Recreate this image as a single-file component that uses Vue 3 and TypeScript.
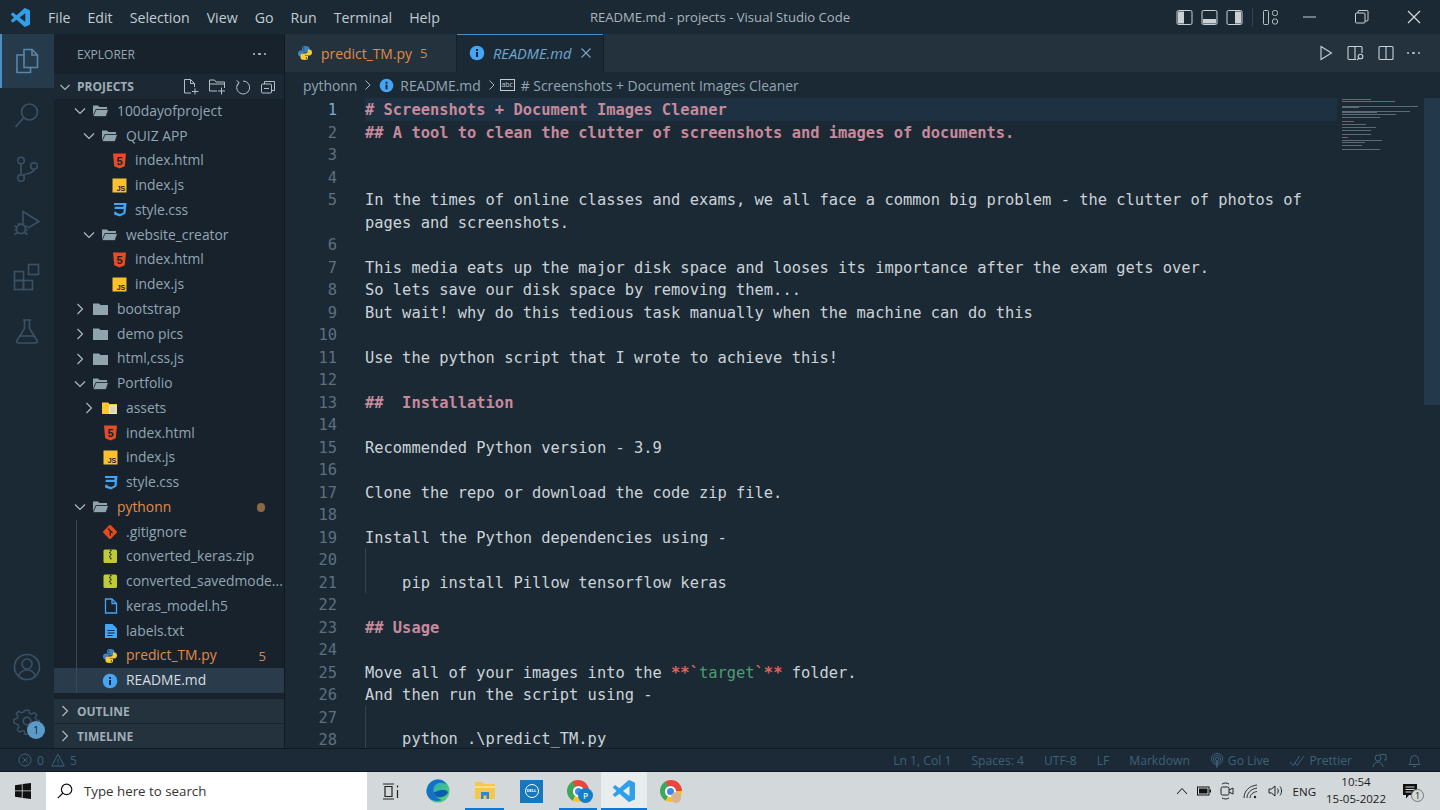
<script setup lang="ts">
interface TreeRow {
  label: string
  depth: number
  icon: string
  open?: boolean
  cls?: string
  guide?: boolean
  badge?: string
  dot?: boolean
}

interface Seg {
  t: string
  c?: string
}

interface CodeRow {
  n: number | null
  segs: Seg[]
  guide?: boolean
}

const menus = ['File', 'Edit', 'Selection', 'View', 'Go', 'Run', 'Terminal', 'Help']

const tree: TreeRow[] = [
  { label: '100dayofproject', depth: 0, icon: 'folder-open', open: true },
  { label: 'QUIZ APP', depth: 1, icon: 'folder-open', open: true },
  { label: 'index.html', depth: 2, icon: 'html' },
  { label: 'index.js', depth: 2, icon: 'js' },
  { label: 'style.css', depth: 2, icon: 'css' },
  { label: 'website_creator', depth: 1, icon: 'folder-open', open: true },
  { label: 'index.html', depth: 2, icon: 'html' },
  { label: 'index.js', depth: 2, icon: 'js' },
  { label: 'bootstrap', depth: 0, icon: 'folder', open: false },
  { label: 'demo pics', depth: 0, icon: 'folder', open: false },
  { label: 'html,css,js', depth: 0, icon: 'folder', open: false },
  { label: 'Portfolio', depth: 0, icon: 'folder-open', open: true },
  { label: 'assets', depth: 1, icon: 'folder-assets', open: false },
  { label: 'index.html', depth: 1, icon: 'html' },
  { label: 'index.js', depth: 1, icon: 'js' },
  { label: 'style.css', depth: 1, icon: 'css' },
  { label: 'pythonn', depth: 0, icon: 'folder-open', open: true, cls: 'warn', dot: true },
  { label: '.gitignore', depth: 1, icon: 'git', guide: true },
  { label: 'converted_keras.zip', depth: 1, icon: 'zip', guide: true },
  { label: 'converted_savedmode...', depth: 1, icon: 'zip', guide: true },
  { label: 'keras_model.h5', depth: 1, icon: 'file', guide: true },
  { label: 'labels.txt', depth: 1, icon: 'txt', guide: true },
  { label: 'predict_TM.py', depth: 1, icon: 'python', cls: 'warn', guide: true, badge: '5' },
  { label: 'README.md', depth: 1, icon: 'info', cls: 'selected', guide: true },
]

const plain = (n: number | null, t = '', guide = false): CodeRow => ({
  n,
  segs: t ? [{ t }] : [],
  guide,
})
const head = (n: number, t: string): CodeRow => ({ n, segs: [{ t, c: 'heading' }] })

const code: CodeRow[] = [
  head(1, '# Screenshots + Document Images Cleaner'),
  head(2, '## A tool to clean the clutter of screenshots and images of documents.'),
  plain(3),
  plain(4),
  plain(5, 'In the times of online classes and exams, we all face a common big problem - the clutter of photos of'),
  plain(null, 'pages and screenshots.'),
  plain(6),
  plain(7, 'This media eats up the major disk space and looses its importance after the exam gets over.'),
  plain(8, 'So lets save our disk space by removing them...'),
  plain(9, 'But wait! why do this tedious task manually when the machine can do this'),
  plain(10),
  plain(11, 'Use the python script that I wrote to achieve this!'),
  plain(12),
  head(13, '##  Installation'),
  plain(14),
  plain(15, 'Recommended Python version - 3.9'),
  plain(16),
  plain(17, 'Clone the repo or download the code zip file.'),
  plain(18),
  plain(19, 'Install the Python dependencies using -'),
  plain(20, '', true),
  plain(21, '    pip install Pillow tensorflow keras', true),
  plain(22),
  head(23, '## Usage'),
  plain(24),
  {
    n: 25,
    segs: [
      { t: 'Move all of your images into the ' },
      { t: '**`', c: 'mark' },
      { t: 'target', c: 'inline' },
      { t: '`**', c: 'mark' },
      { t: ' folder.' },
    ],
  },
  plain(26, 'And then run the script using -'),
  plain(27, '', true),
  plain(28, '    python .\\predict_TM.py', true),
]

// the minimap also shows two rows that sit below the visible part of the file
const miniRows = [
  ...code.map((r) => ({
    width: r.segs.reduce((sum, s) => sum + s.t.length, 0),
    heading: r.segs[0]?.c === 'heading',
  })),
  { width: 0, heading: false },
  { width: 50, heading: false },
]

const rowIndent = (depth: number) => `${18 + depth * 9}px`
</script>

<template>
  <div class="page">
    <svg class="defs" aria-hidden="true">
      <symbol id="i-python" viewBox="0 0 16 16">
        <path fill="#3f83bd" d="M8 1C5.200 1 5 2.200 5 3.400V5h3.200v.6H3.500C2 5.600 1 6.800 1 8.500s1 3 2.500 3H5V9.700c0-1.200 1-2.200 2.300-2.200h3.200c1.100 0 2-.9 2-2V3.300C12.500 2 11 1 8 1z" />
        <path fill="#f5cd3d" d="M8 15c2.800 0 3-1.200 3-2.400V11H7.800v-.6h4.700c1.500 0 2.500-1.200 2.500-2.900s-1-3-2.500-3H11v1.800c0 1.200-1 2.200-2.300 2.200H5.500c-1.100 0-2 .9-2 2v2.200C3.500 14 5 15 8 15z" />
        <circle cx="6.600" cy="3" r=".7" fill="#17222d" />
        <circle cx="9.400" cy="13" r=".7" fill="#17222d" />
      </symbol>
      <symbol id="i-info" viewBox="0 0 16 16">
        <circle cx="8" cy="8" r="7.300" fill="#42a5f5" />
        <rect x="7" y="7" width="2" height="5" fill="#17222d" />
        <rect x="7" y="4" width="2" height="2" fill="#17222d" />
      </symbol>
      <symbol id="i-vscode" viewBox="0 0 24 24">
        <path fill="#2f9fe8" d="M23.150 2.587L18.210.21a1.494 1.494 0 0 0-1.705.29l-9.460 8.630-4.120-3.128a.999.999 0 0 0-1.276.057L.327 7.261A1 1 0 0 0 .326 8.740L3.899 12 .326 15.260a1 1 0 0 0 .001 1.479L1.650 17.940a.999.999 0 0 0 1.276.057l4.120-3.128 9.460 8.630a1.492 1.492 0 0 0 1.704.29l4.942-2.377A1.500 1.500 0 0 0 24 20.060V3.939a1.500 1.500 0 0 0-.85-1.352zm-5.146 14.861L10.826 12l7.178-5.448v10.896z" />
      </symbol>
    </svg>

    <header class="titlebar">
      <svg class="logo" width="19" height="19" viewBox="0 0 24 24"><use href="#i-vscode" /></svg>
      <nav class="menu">
        <span v-for="m in menus" :key="m">{{ m }}</span>
      </nav>
      <div class="window-title">README.md - projects - Visual Studio Code</div>
      <div class="title-actions">
        <svg width="17" height="17" viewBox="0 0 17 17"><rect x="1" y="1.500" width="15" height="14" rx="1.500" fill="none" stroke="#c9d1d6" /><path d="M2 2.500h6v12H2z" fill="#c9d1d6" /></svg>
        <svg width="17" height="17" viewBox="0 0 17 17"><rect x="1" y="1.500" width="15" height="14" rx="1.500" fill="none" stroke="#c9d1d6" /><path d="M2 10h13v4.500H2z" fill="#c9d1d6" /></svg>
        <svg width="17" height="17" viewBox="0 0 17 17"><rect x="1" y="1.500" width="15" height="14" rx="1.500" fill="none" stroke="#c9d1d6" /><path d="M9 2.500h6v12H9z" fill="#c9d1d6" /></svg>
        <i class="title-sep"></i>
        <svg width="17" height="17" viewBox="0 0 17 17" fill="none" stroke="#b8c2c8"><rect x="1.500" y="1.500" width="5" height="14" rx="1" /><rect x="10.500" y="1.500" width="5" height="5" rx="2" /><rect x="10.500" y="10" width="5" height="5" rx="2" /></svg>
      </div>
      <div class="win-controls">
        <svg width="14" height="14" viewBox="0 0 14 14"><path d="M0 7h13" stroke="#c9d1d6" /></svg>
        <svg width="14" height="14" viewBox="0 0 14 14" fill="none" stroke="#c9d1d6"><rect x=".5" y="3" width="9.500" height="10" rx="1" /><path d="M3 3V1.500a1 1 0 0 1 1-1h8a1 1 0 0 1 1 1V10a1 1 0 0 1-1 1h-2" /></svg>
        <svg width="14" height="14" viewBox="0 0 14 14"><path d="M1 1l12 12M13 1L1 13" stroke="#d4dade" stroke-width="1.200" /></svg>
      </div>
    </header>

    <div class="workbench">
      <aside class="activity">
        <div class="act act-on">
          <svg width="28" height="28" viewBox="0 0 28 28" fill="none" stroke="#5b87a8" stroke-width="1.600"><path d="M11 2.500h8l5.500 5.500v12.500H11z" /><path d="M19 2.500V8h5.500" /><path d="M11 8H4v17.500h13.500v-5" /></svg>
        </div>
        <div class="act">
          <svg width="28" height="28" viewBox="0 0 28 28" fill="none" stroke="#3b5164" stroke-width="1.600"><circle cx="16.500" cy="11" r="8" /><path d="M10.500 17L2.500 26" /></svg>
        </div>
        <div class="act">
          <svg width="28" height="28" viewBox="0 0 28 28" fill="none" stroke="#3b5164" stroke-width="1.600"><circle cx="8" cy="5.500" r="3.300" /><circle cx="8" cy="23" r="3.300" /><circle cx="21" cy="11" r="3.300" /><path d="M8 9v10.500M21 14.500c0 4-7 3-11 6" /></svg>
        </div>
        <div class="act">
          <svg width="28" height="28" viewBox="0 0 28 28" fill="none" stroke="#3b5164" stroke-width="1.600"><path d="M10 14V2.500L26 12.500 15 19" /><circle cx="8" cy="20" r="4.500" /><path d="M1.500 17l3 1.500M1.500 21h2M1.500 25.500l3-2M14.500 17l-3 1.500M14.500 21h-2M14.500 25.500l-3-2M4.500 15h7" /></svg>
        </div>
        <div class="act">
          <svg width="28" height="28" viewBox="0 0 28 28" fill="none" stroke="#3b5164" stroke-width="1.600"><rect x="1.500" y="8.500" width="9" height="9" /><rect x="1.500" y="17.500" width="9" height="9" /><rect x="10.500" y="17.500" width="9" height="9" /><rect x="15.500" y="1.500" width="10" height="10" /></svg>
        </div>
        <div class="act">
          <svg width="28" height="28" viewBox="0 0 28 28" fill="none" stroke="#3b5164" stroke-width="1.600"><path d="M10 3h8M11.500 3v8.500L4 23.500c-.8 1.500 0 2.500 1.500 2.500h17c1.500 0 2.300-1 1.500-2.500L16.500 11.500V3" /><path d="M7 19h14" /></svg>
        </div>
        <div class="act act-account">
          <svg width="28" height="28" viewBox="0 0 28 28" fill="none" stroke="#3b5164" stroke-width="1.600"><circle cx="14" cy="14" r="12.500" /><circle cx="14" cy="11" r="5" /><path d="M5.500 23c1.500-4 4.500-6 8.500-6s7 2 8.500 6" /></svg>
        </div>
        <div class="act act-gear">
          <svg width="28" height="28" viewBox="0 0 28 28" fill="none" stroke="#3b5164" stroke-width="1.600"><circle cx="14" cy="14" r="3.800" /><path d="M12 2h4l.8 3.500 2.300 1 3-1.900 2.800 2.800-1.900 3 1 2.300 3.500.8v4l-3.500.8-1 2.300 1.900 3-2.800 2.800-3-1.900-2.300 1-.8 3.500h-4l-.8-3.500-2.300-1-3 1.900-2.800-2.800 1.900-3-1-2.300L-.5 16v-4L3 11.200l1-2.300-1.900-3 2.800-2.800 3 1.900 2.300-1z" transform="translate(1.400 1.400) scale(.9)" /></svg>
          <span class="gear-badge">1</span>
        </div>
      </aside>

      <aside class="sidebar">
        <div class="side-title">
          <span>EXPLORER</span>
          <span class="dots"><i></i><i></i><i></i></span>
        </div>
        <div class="projects-head">
          <svg class="chev" width="16" height="16" viewBox="0 0 16 16"><path d="M3.500 6l4.500 4.500L12.500 6" fill="none" stroke="#a9b6bf" stroke-width="1.100" /></svg>
          <strong>PROJECTS</strong>
          <div class="projects-actions">
            <svg width="17" height="17" viewBox="0 0 17 17" fill="none" stroke="#b3bec5"><path d="M9 15H2.500V1.500h6l4 4V9M8.500 1.500v4h4M13 10.500v6M10 13.500h6.500" /></svg>
            <svg width="18" height="17" viewBox="0 0 18 17" fill="none" stroke="#b3bec5"><path d="M9 13H1.500V2h5l1.500 2h8.500v6M1.500 6h15M13.500 9.500v7M10 13h7" /></svg>
            <svg width="16" height="16" viewBox="0 0 16 16" fill="none" stroke="#b3bec5"><path d="M4 3.500A6.500 6.500 0 1 0 8 2M1.500 1.500L4 3.500 2.500 6.500" /></svg>
            <svg width="16" height="16" viewBox="0 0 16 16" fill="none" stroke="#b3bec5"><rect x="1.500" y="5" width="10" height="9" rx="1" /><path d="M4.500 5V2.500h10v9H11.500M4 9.500h5" /></svg>
          </div>
        </div>
        <div class="tree">
          <div
            v-for="(row, i) in tree"
            :key="i"
            class="tree-row"
            :class="[row.cls, { guided: row.guide }]"
            :style="{ paddingLeft: rowIndent(row.depth) }"
          >
            <span class="chev-slot">
              <svg v-if="row.open === true" width="16" height="16" viewBox="0 0 16 16"><path d="M3 5.500l5 5 5-5" fill="none" stroke="#b3bec5" stroke-width="1.100" /></svg>
              <svg v-else-if="row.open === false" width="16" height="16" viewBox="0 0 16 16"><path d="M5.500 3l5 5-5 5" fill="none" stroke="#b3bec5" stroke-width="1.100" /></svg>
            </span>
            <span class="file-icon">
              <svg v-if="row.icon === 'folder-open'" width="17" height="16" viewBox="0 0 17 16"><path d="M1 13V2.500h5l1.500 1.500H15v2H4z" fill="#90a4ae" /><path d="M1 13.500l3-7h12.500l-2.500 7z" fill="#90a4ae" stroke="#17222d" stroke-width=".7" /></svg>
              <svg v-else-if="row.icon === 'folder'" width="17" height="16" viewBox="0 0 17 16"><path d="M1 2.500h6l1.500 1.500H16v10H1z" fill="#90a4ae" /></svg>
              <svg v-else-if="row.icon === 'folder-assets'" width="17" height="16" viewBox="0 0 17 16"><path d="M1 2.500h6l1.500 1.500H16v10H1z" fill="#fdc52f" /><rect x="8.500" y="6" width="6.500" height="7.500" fill="#d8d6b8" stroke="#f0ecd2" /></svg>
              <svg v-else-if="row.icon === 'html'" width="15" height="16" viewBox="0 0 15 16">
                <path d="M1 .5h13l-1.200 12.800L7.500 15.500l-5.300-2.200z" fill="#e44d26" />
                <text x="7.500" y="11.500" text-anchor="middle" font-size="11" font-weight="700" font-family="Liberation Sans, sans-serif" fill="#17222d">5</text>
              </svg>
              <svg v-else-if="row.icon === 'js'" width="15" height="15" viewBox="0 0 15 15">
                <rect x=".5" y=".5" width="14" height="14" fill="#fbc02d" />
                <text x="9" y="12.500" text-anchor="middle" font-size="7" font-weight="700" font-family="Liberation Sans, sans-serif" fill="#17222d">JS</text>
              </svg>
              <svg v-else-if="row.icon === 'css'" width="15" height="16" viewBox="0 0 15 16"><path d="M2 1h12.500l-1 10.500-5.500 3-6-2 .3-2.800h2.300l-.1 1.100 3.600 1.200 3.300-1.600.3-3.400H2.500l.3-2.300h8.600l.2-1.600H2z" fill="#42a5f5" /></svg>
              <svg v-else-if="row.icon === 'git'" width="16" height="16" viewBox="0 0 16 16"><rect x="2.700" y="2.700" width="10.600" height="10.600" rx="1.200" transform="rotate(45 8 8)" fill="#e64a19" /><path d="M6 4.500l2.200 2.200v5M8.200 6.700l2.300 2.300" stroke="#17222d" stroke-width="1.200" fill="none" /></svg>
              <svg v-else-if="row.icon === 'zip'" width="15" height="15" viewBox="0 0 15 15"><rect x=".5" y=".5" width="13.500" height="13.500" rx="1.500" fill="#c0ca33" /><path d="M7 1.500h1.500M6 3.500h1.500M7 5.500h1.500M6 7.500h1.500M7 9.500h1.500" stroke="#17222d" stroke-width="1.300" /></svg>
              <svg v-else-if="row.icon === 'file'" width="14" height="16" viewBox="0 0 14 16" fill="none" stroke="#42a5f5" stroke-width="1.300"><path d="M1.500 1H8l4.500 4.500V15h-11z" /><path d="M8 1v4.500h4.500" /></svg>
              <svg v-else-if="row.icon === 'txt'" width="14" height="16" viewBox="0 0 14 16"><path d="M1 1h7.500L13 5.500V15H1z" fill="#42a5f5" /><path d="M3.500 7.500h7M3.500 10h7M3.500 12.500h5" stroke="#17222d" /></svg>
              <svg v-else-if="row.icon === 'python'" width="16" height="16"><use href="#i-python" /></svg>
              <svg v-else-if="row.icon === 'info'" width="16" height="16"><use href="#i-info" /></svg>
            </span>
            <span class="tree-label">{{ row.label }}</span>
            <span v-if="row.badge" class="tree-badge">{{ row.badge }}</span>
            <i v-if="row.dot" class="tree-dot"></i>
          </div>
        </div>
        <div class="collapsed-head">
          <svg width="16" height="16" viewBox="0 0 16 16"><path d="M5.500 3l5 5-5 5" fill="none" stroke="#b3bec5" stroke-width="1.100" /></svg>
          <strong>OUTLINE</strong>
        </div>
        <div class="collapsed-head">
          <svg width="16" height="16" viewBox="0 0 16 16"><path d="M5.500 3l5 5-5 5" fill="none" stroke="#b3bec5" stroke-width="1.100" /></svg>
          <strong>TIMELINE</strong>
        </div>
      </aside>

      <main class="editor">
        <div class="tabs">
          <div class="tab">
            <svg width="16" height="16"><use href="#i-python" /></svg>
            <span class="tab-warn">predict_TM.py</span>
            <span class="tab-count">5</span>
          </div>
          <div class="tab tab-active">
            <svg width="16" height="16"><use href="#i-info" /></svg>
            <em>README.md</em>
            <svg class="tab-close" width="12" height="12" viewBox="0 0 12 12"><path d="M1.500 1.500l9 9M10.500 1.500l-9 9" stroke="#7ba7c9" stroke-width="1.100" /></svg>
          </div>
          <div class="tab-actions">
            <svg width="16" height="16" viewBox="0 0 16 16" fill="none" stroke="#c9d1d6" stroke-width="1.100"><path d="M3 1.500L13.500 8 3 14.500z" /></svg>
            <svg width="18" height="16" viewBox="0 0 18 16" fill="none" stroke="#c9d1d6" stroke-width="1.100"><path d="M9 14.500H2a1 1 0 0 1-1-1v-11a1 1 0 0 1 1-1h12a1 1 0 0 1 1 1V8M8 1.500v13" /><circle cx="13.500" cy="11.500" r="2.300" /><path d="M11.800 13.200L10 15" /></svg>
            <svg width="16" height="16" viewBox="0 0 16 16" fill="none" stroke="#c9d1d6" stroke-width="1.100"><rect x="1" y="1.500" width="14" height="13" rx="1" /><path d="M8 1.500v13" /></svg>
            <span class="dots"><i></i><i></i><i></i></span>
          </div>
        </div>
        <div class="crumbs">
          <span>pythonn</span>
          <svg width="10" height="12" viewBox="0 0 10 12"><path d="M2.500 1.500L7 6l-4.500 4.500" fill="none" stroke="#a9b6bf" /></svg>
          <svg width="15" height="15"><use href="#i-info" /></svg>
          <span>README.md</span>
          <svg width="10" height="12" viewBox="0 0 10 12"><path d="M2.500 1.500L7 6l-4.500 4.500" fill="none" stroke="#a9b6bf" /></svg>
          <span class="abc">abc</span>
          <span># Screenshots + Document Images Cleaner</span>
        </div>
        <div class="code-area">
          <div class="code">
            <div v-for="(row, i) in code" :key="i" class="code-row">
              <span class="ln" :class="{ 'ln-on': row.n === 1 }">{{ row.n }}</span>
              <span class="line" :class="{ 'line-on': row.n === 1, 'line-guide': row.guide }"><span v-for="(seg, j) in row.segs" :key="j" :class="seg.c">{{ seg.t }}</span></span>
            </div>
          </div>
          <div class="minimap">
            <div v-for="(m, i) in miniRows" :key="i" class="mini-row">
              <i :class="{ 'mini-head': m.heading }" :style="{ width: `${m.width * 0.75}px` }"></i>
            </div>
          </div>
          <div class="scrolltrack"><div class="scrollthumb"></div></div>
        </div>
      </main>
    </div>

    <footer class="statusbar">
      <div class="status-left">
        <svg width="14" height="14" viewBox="0 0 14 14" fill="none" stroke="#3e6179"><circle cx="7" cy="7" r="6" /><path d="M4.500 4.500l5 5M9.500 4.500l-5 5" /></svg>
        <span>0</span>
        <svg width="14" height="14" viewBox="0 0 14 14" fill="none" stroke="#3e6179"><path d="M7 1.200L13.200 13H.8zM7 5.500v4M7 10.500v1.200" /></svg>
        <span>5</span>
      </div>
      <div class="status-right">
        <span>Ln 1, Col 1</span>
        <span>Spaces: 4</span>
        <span>UTF-8</span>
        <span>LF</span>
        <span>Markdown</span>
        <span class="with-icon">
          <svg width="14" height="15" viewBox="0 0 14 15" fill="none" stroke="#3e6179"><circle cx="7" cy="6" r="1.600" /><circle cx="7" cy="6" r="3.600" /><circle cx="7" cy="6" r="5.600" /><path d="M7 8v6.500" stroke-width="1.600" /></svg>
          Go Live
        </span>
        <span class="with-icon">
          <svg width="16" height="13" viewBox="0 0 16 13" fill="none" stroke="#3e6179"><path d="M1 8l3 3.500L10.500 2M6 9l2 2.500L15 2" /></svg>
          Prettier
        </span>
        <svg width="15" height="15" viewBox="0 0 15 15" fill="none" stroke="#3e6179"><circle cx="6" cy="5" r="3" /><path d="M1 14c.5-3 2.500-5 5-5s4.500 2 5 5M8 1.500h6V7h-2" /></svg>
        <svg width="15" height="15" viewBox="0 0 15 15" fill="none" stroke="#3e6179"><path d="M2 11.500c1.500-1 1.500-2.500 1.500-5a4 4 0 0 1 8 0c0 2.500 0 4 1.500 5zM6 13.500h3" /></svg>
      </div>
    </footer>

    <div class="taskbar">
      <div class="start">
        <svg width="16" height="16" viewBox="0 0 16 16" fill="#111"><path d="M0 2.200L6.800 1.200V7.500H0zM7.600 1.100L16 0V7.500H7.600zM0 8.300H6.800V14.800L0 13.800zM7.600 8.300H16V16L7.600 14.900z" /></svg>
      </div>
      <div class="search">
        <svg width="16" height="16" viewBox="0 0 20 20" fill="none" stroke="#111" stroke-width="1.500"><circle cx="12" cy="8" r="6.500" /><path d="M7.500 12.500L1 19" /></svg>
        <span>Type here to search</span>
      </div>
      <div class="task-apps">
        <div class="task-cell">
          <svg width="18" height="17" viewBox="0 0 18 17" fill="none" stroke="#222" stroke-width="1.200"><path d="M1 1h11M1 16h11M3 3.500h7v10H3zM15.500 2.500v2M15.500 7v8" /></svg>
        </div>
        <div class="task-cell">
          <svg width="24" height="24" viewBox="0 0 24 24">
            <defs>
              <linearGradient id="edge-a" x1="0" y1="0" x2="1" y2="1"><stop offset="0" stop-color="#1aa3c9" /><stop offset="1" stop-color="#5ed66b" /></linearGradient>
            </defs>
            <circle cx="12" cy="12" r="11.500" fill="url(#edge-a)" />
            <path d="M.5 12C1.500 5 6 .5 12 .5c4 0 7 2 8.500 5-3-2.500-10-3-12.500 2.500-2 4.500 1 11 8 13-1.500.7-3 1-4.500 1C5 22 .5 18 .5 12z" fill="#1570c8" />
            <path d="M8 13c0 4 4 6 8 5 3-.7 5-2.300 6-4.500-.3-3-6-3.500-9-2-2 1-3 1-5 1.500z" fill="#0e5cb0" />
          </svg>
        </div>
        <div class="task-cell running">
          <svg width="22" height="20" viewBox="0 0 22 20"><path d="M1 1h7l2 2h11v15H1z" fill="#f5c74b" /><path d="M1 5h20v2H1z" fill="#fbe08a" /><path d="M7 11h8v7h-2.500v-3.500h-3V18H7z" fill="#2a88d8" /></svg>
        </div>
        <div class="task-cell">
          <div class="dell"><span>DELL</span></div>
        </div>
        <div class="task-cell task-narrow running">
          <div class="chrome"><i></i></div>
          <span class="profile-p">P</span>
        </div>
        <div class="task-cell task-narrow running task-active">
          <svg width="22" height="22" viewBox="0 0 24 24"><use href="#i-vscode" /></svg>
        </div>
        <div class="task-cell">
          <div class="chrome"><i></i></div>
          <span class="profile-photo"></span>
        </div>
      </div>
      <div class="tray">
        <svg width="12" height="8" viewBox="0 0 12 8"><path d="M1 7l5-5.500L11 7" fill="none" stroke="#111" /></svg>
        <svg width="14" height="10" viewBox="0 0 14 10"><rect x=".5" y="1" width="11.500" height="8" fill="none" stroke="#111" /><rect x="12.500" y="3.500" width="1.500" height="3" fill="#111" /><rect x="2" y="2.500" width="8.500" height="5" fill="#111" /></svg>
        <svg width="14" height="18" viewBox="0 0 14 18" fill="none" stroke="#222"><path d="M2 2c2-1.300 5-1.300 7 0M2 16c2 1.300 5 1.300 7 0" /><rect x="1" y="5" width="8" height="8" rx="1.500" /><path d="M9 8l4-2v6l-4-2" /></svg>
        <svg width="16" height="15" viewBox="0 0 16 15" fill="none" stroke="#333"><path d="M1 14C1 7 6 2 14 1M4 14c0-5 4-9 10-10M7 14c0-3 3-6 7-6.500" /><circle cx="12" cy="13" r="1.200" fill="#222" stroke="none" /></svg>
        <svg width="16" height="14" viewBox="0 0 16 14" fill="none" stroke="#222"><path d="M1 5v4h2.500L7 12V2L3.500 5zM9.500 4.500c1 1.500 1 3.500 0 5M12 2.500c2 2.500 2 6.500 0 9" /></svg>
        <span class="eng">ENG</span>
        <div class="clock">
          <span>10:54</span>
          <span>15-05-2022</span>
        </div>
        <div class="notif">
          <svg width="16" height="17" viewBox="0 0 16 17"><path d="M1 1h14v11H7l-3 3.500V12H1z" fill="#111" /><path d="M3.500 4h9M3.500 6.500h9M3.500 9h6" stroke="#d3d8da" /></svg>
          <span>1</span>
        </div>
      </div>
    </div>
  </div>
</template>

<style scoped>
.page {
  width: 1440px;
  height: 810px;
  overflow: hidden;
  display: flex;
  flex-direction: column;
  background: #1b2934;
  color: #a9b6bf;
  font-family: "Open Sans", "Noto Sans", sans-serif;
}

.defs {
  position: absolute;
  width: 0;
  height: 0;
}

.titlebar {
  height: 34px;
  flex: none;
  display: flex;
  align-items: center;
  position: relative;
  background: #1b2934;
}

.logo {
  margin-left: 11px;
}

.menu {
  display: flex;
  gap: 17px;
  margin-left: 18px;
  font-size: 14.2px;
  color: #c2ccd2;
}

.window-title {
  position: absolute;
  left: 0;
  right: 0;
  text-align: center;
  font-size: 13.1px;
  color: #a9b6bf;
}

.title-actions {
  margin-left: auto;
  display: flex;
  align-items: center;
  gap: 8px;
}

.title-sep {
  width: 1px;
  height: 18px;
  margin: 0 .75px;
  background: #33434f;
}

.win-controls {
  display: flex;
  align-items: center;
  gap: 38px;
  margin: 0 19px 0 24.5px;
}

.workbench {
  flex: 1;
  min-height: 0;
  display: flex;
}

.activity {
  width: 54px;
  flex: none;
  display: flex;
  flex-direction: column;
  background: #1b2934;
}

.act {
  height: 54px;
  flex: none;
  display: flex;
  align-items: center;
  justify-content: center;
  position: relative;
}

.act-on {
  background: #253a4b;
  box-shadow: inset 2px 0 0 #4c8fc4;
}

.act-account {
  margin-top: auto;
}

.gear-badge {
  position: absolute;
  left: 27px;
  top: 27px;
  width: 18px;
  height: 18px;
  border-radius: 50%;
  background: #5b9bc9;
  color: #14202a;
  font-size: 10px;
  line-height: 18px;
  text-align: center;
}

.sidebar {
  width: 231px;
  flex: none;
  display: flex;
  flex-direction: column;
  background: #17222d;
  border-right: 1px solid #111a22;
  box-sizing: border-box;
}

.side-title {
  height: 40px;
  flex: none;
  display: flex;
  align-items: center;
  justify-content: space-between;
  padding: 0 18px 0 23px;
  font-size: 12px;
  color: #98a6b0;
}

.dots {
  display: inline-flex;
  gap: 3px;
}

.dots i {
  width: 2.5px;
  height: 2.5px;
  border-radius: 50%;
  background: #b8c2c8;
}

.projects-head {
  height: 25px;
  flex: none;
  display: flex;
  align-items: center;
  background: #1c2934;
  padding-left: 3px;
  font-size: 12px;
  color: #9fadb7;
}

.projects-head strong,
.collapsed-head strong {
  margin-left: 4px;
  font-weight: 700;
}

.chev {
  flex: none;
}

.projects-actions {
  margin-left: auto;
  display: flex;
  align-items: center;
  gap: 9px;
  padding-right: 8px;
}

.tree {
  flex: 1;
  min-height: 0;
  overflow: hidden;
}

.tree-row {
  height: 24.75px;
  box-sizing: border-box;
  display: flex;
  align-items: center;
  position: relative;
  font-size: 13.85px;
  color: #93a5b2;
  white-space: nowrap;
}

.tree-row.guided::before {
  content: "";
  position: absolute;
  left: 22px;
  top: 0;
  bottom: 0;
  width: 1px;
  background: #3a4a56;
}

.tree-row.warn {
  color: #e28b45;
}

.tree-row.selected {
  background: #2a3c4b;
  color: #d5dde2;
}

.chev-slot {
  width: 16px;
  height: 16px;
  flex: none;
  display: flex;
}

.file-icon {
  width: 29px;
  flex: none;
  display: flex;
  justify-content: flex-end;
  padding-right: 8px;
  box-sizing: border-box;
}

.tree-label {
  flex: 1;
  min-width: 0;
  padding-bottom: 2px;
}

.tree-badge {
  margin-right: 18px;
  font-size: 13px;
  color: #d28a4d;
}

.tree-dot {
  width: 8.5px;
  height: 8.5px;
  margin-right: 19px;
  border-radius: 50%;
  background: #8a6a45;
}

.collapsed-head {
  height: 24px;
  flex: none;
  display: flex;
  align-items: center;
  padding-left: 2px;
  margin-top: 1px;
  background: #24323e;
  font-size: 12px;
  color: #9fadb7;
}

.collapsed-head svg {
  margin-left: 1px;
}

.editor {
  flex: 1;
  min-width: 0;
  display: flex;
  flex-direction: column;
  background: #1b2934;
}

.tabs {
  height: 38px;
  flex: none;
  display: flex;
  background: #24323e;
}

.tab {
  display: flex;
  align-items: center;
  gap: 8px;
  padding: 0 14px 0 12px;
  width: 172px;
  box-sizing: border-box;
  font-size: 13.9px;
}

.tab-warn {
  color: #e28b45;
}

.tab-count {
  font-size: 13px;
  color: #c98a53;
}

.tab-active {
  width: 146px;
  padding-right: 0;
  background: #1b2934;
  box-shadow: inset 0 1px 0 #4c8fc4, 1px 0 0 #14202a, -1px 0 0 #14202a;
}

.tab-active em {
  font-size: 14.6px;
  color: #6fa6d2;
}

.tab-close {
  margin-left: 1px;
}

.tab-actions {
  margin-left: auto;
  display: flex;
  align-items: center;
  gap: 13px;
  padding-right: 20px;
}

.crumbs {
  height: 26px;
  flex: none;
  display: flex;
  align-items: center;
  gap: 6px;
  padding-left: 18px;
  font-size: 13.9px;
  color: #93a5b2;
}

.abc {
  width: 15px;
  height: 12px;
  margin-left: -3px;
  box-sizing: border-box;
  border: 1px solid #c2ccd2;
  font-size: 7px;
  line-height: 9px;
  text-align: center;
  color: #c2ccd2;
}

.code-area {
  flex: 1;
  min-height: 0;
  display: flex;
  overflow: hidden;
}

.code {
  flex: 1;
  min-width: 0;
  font-family: "DejaVu Sans Mono", "Liberation Mono", monospace;
  font-size: 15.41px;
  color: #ccd3d8;
}

.code-row {
  height: 22.5px;
  display: flex;
  align-items: center;
}

.ln {
  width: 52px;
  flex: none;
  padding-top: 2px;
  text-align: right;
  color: #5d7080;
}

.ln-on {
  color: #7ea9cc;
}

.line {
  margin-left: 28px;
  flex: 1;
  height: 100%;
  line-height: 24.5px;
  white-space: pre;
  box-sizing: border-box;
}

/* the last row runs into the status bar, keep its underscore above the edge */
.code-row:last-child .line {
  line-height: 22.5px;
}

.line-on {
  background: #1d3142;
}

.line-guide {
  box-shadow: inset 1px 0 0 #34434f;
}

.heading {
  color: #c78a9c;
  font-weight: 700;
}

.mark {
  color: #d26a5b;
  font-weight: 700;
}

.inline {
  color: #4f9c72;
}

.minimap {
  width: 87px;
  flex: none;
  padding: 1px 0 0 5px;
  box-sizing: border-box;
}

.mini-row {
  height: 1.66px;
  overflow: hidden;
}

.mini-row i {
  display: block;
  height: 1px;
  background: #5c6b76;
}

.mini-row i.mini-head {
  background: #7f5f6c;
}

.scrolltrack {
  width: 16px;
  flex: none;
}

.scrollthumb {
  height: 307px;
  background: #23384a;
}

.statusbar {
  height: 24px;
  flex: none;
  box-sizing: border-box;
  display: flex;
  align-items: center;
  justify-content: space-between;
  padding: 0 18px;
  border-top: 1px solid #121b23;
  border-bottom: 1px solid #121b23;
  background: #1b2a36;
  font-size: 12.15px;
  color: #3e6179;
}

.status-left {
  display: flex;
  align-items: center;
  gap: 5px;
}

.status-left span:first-of-type {
  margin-right: 2px;
}

.status-right {
  display: flex;
  align-items: center;
  gap: 20px;
}

.with-icon {
  display: flex;
  align-items: center;
  gap: 4px;
}

.taskbar {
  height: 38px;
  flex: none;
  display: flex;
  background: #d3d8da;
  color: #1a1a1a;
}

.start {
  width: 46px;
  flex: none;
  display: flex;
  align-items: center;
  justify-content: center;
}

.search {
  width: 321px;
  flex: none;
  display: flex;
  align-items: center;
  gap: 11px;
  padding-left: 11px;
  box-sizing: border-box;
  background: #fff;
  font-size: 13.3px;
  color: #333;
}

.task-apps {
  display: flex;
}

.task-cell {
  width: 47px;
  flex: none;
  display: flex;
  align-items: center;
  justify-content: center;
  position: relative;
}

.task-narrow {
  width: 46px;
}

.running::after {
  content: "";
  position: absolute;
  left: 4px;
  right: 4px;
  bottom: 0;
  height: 2px;
  background: #0f78d4;
}

.task-active {
  background: #e8eced;
}

.task-active::after {
  left: 0;
  right: 0;
}

.dell {
  width: 23px;
  height: 23px;
  background: #1677bd;
  display: flex;
  align-items: center;
  justify-content: center;
}

.dell span {
  width: 14px;
  height: 14px;
  border: 1px solid #fff;
  border-radius: 50%;
  box-sizing: border-box;
  font-size: 4px;
  line-height: 12px;
  font-weight: 700;
  text-align: center;
  color: #fff;
}

.chrome {
  width: 22px;
  height: 22px;
  border-radius: 50%;
  background: conic-gradient(from -30deg, #e9463c 0 120deg, #fbc02d 120deg 240deg, #3ca95a 240deg 360deg);
  display: flex;
  align-items: center;
  justify-content: center;
}

.chrome i {
  width: 11px;
  height: 11px;
  border-radius: 50%;
  background: #3f86ee;
  border: 2px solid #fff;
  box-sizing: border-box;
}

.profile-p {
  position: absolute;
  left: 23px;
  top: 16px;
  width: 15px;
  height: 15px;
  border-radius: 50%;
  background: #1280c8;
  color: #d9ecf8;
  font-size: 8.5px;
  font-weight: 600;
  line-height: 15px;
  text-align: center;
}

.profile-photo {
  position: absolute;
  left: 24px;
  top: 20px;
  width: 10px;
  height: 11px;
  border-radius: 50%;
  background: #d8b590;
}

.tray {
  margin-left: auto;
  display: flex;
  align-items: center;
  gap: 9px;
  padding-right: 22px;
}

.eng {
  font-size: 11.5px;
}

.clock {
  width: 66px;
  margin: 0 0 3px -2px;
  display: flex;
  flex-direction: column;
  align-items: center;
  gap: 4px;
  font-size: 11.5px;
  line-height: 13px;
}

.notif {
  position: relative;
  margin-left: 4px;
  display: flex;
}

.notif span {
  position: absolute;
  left: 9px;
  top: 6px;
  width: 13px;
  height: 13px;
  box-sizing: border-box;
  border: 1px solid #777;
  border-radius: 50%;
  background: #d3d8da;
  font-size: 9px;
  line-height: 11px;
  text-align: center;
}
</style>

<style>
html,
body {
  margin: 0;
  background: #1b2934;
}
</style>
